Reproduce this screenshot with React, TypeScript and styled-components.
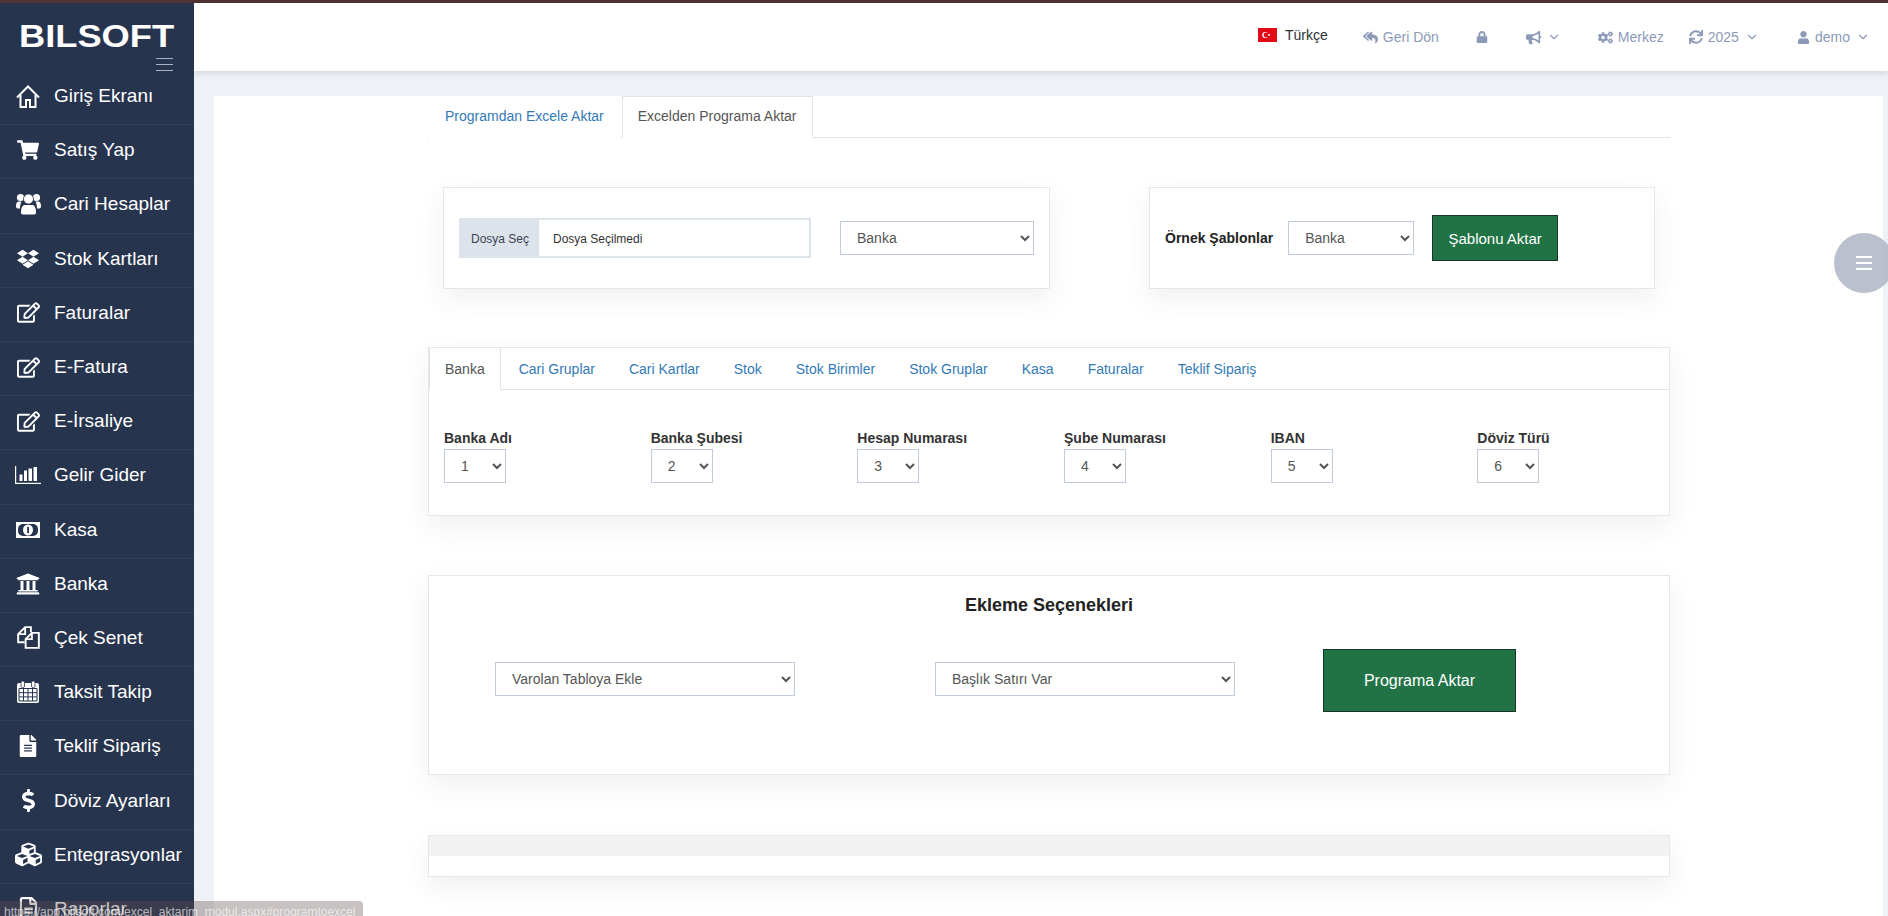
import React from "react";
import styled, { createGlobalStyle } from "styled-components";
import {
  FaShoppingCart,
  FaDropbox,
  FaRegEdit,
  FaUniversity,
  FaFileAlt,
  FaDollarSign,
  FaCubes,
  FaRegFileAlt,
  FaReplyAll,
  FaLock,
  FaBullhorn,
  FaCogs,
  FaSync,
  FaUser,
} from "react-icons/fa";
import { LuChevronDown } from "react-icons/lu";

const GlobalStyle = createGlobalStyle`
  html, body {
    margin: 0;
    padding: 0;
    height: 100%;
    overflow: hidden;
    background: #eef1f5;
    font-family: "Liberation Sans", Arial, sans-serif;
  }
  * { box-sizing: border-box; }
`;

const navy = "#27344e";

const HomeIcon = () => (
  <svg width="24" height="23" viewBox="0 0 24 23" fill="none" stroke="currentColor" strokeWidth="2">
    <path d="M1 12.5 12 1.5l11 11" />
    <path d="M4.5 10v12h5.5v-7h4v7h5.5V10" />
  </svg>
);

const UsersIcon = () => (
  <svg width="25" height="22" viewBox="0 0 25 22" fill="currentColor">
    <circle cx="4.5" cy="4.5" r="3.6" />
    <circle cx="20.5" cy="4.5" r="3.6" />
    <path d="M0 13c0-3 1-4.5 3-4.5h2.5C4.5 10.500 4 12.500 4 15.500H1.500C.5 15.500 0 14.500 0 13z" />
    <path d="M25 13c0-3-1-4.500-3-4.500h-2.500c1 2 1.500 4 1.500 7h2.500c1 0 1.500-1 1.500-2.500z" />
    <circle cx="12.5" cy="6" r="5" stroke={navy} strokeWidth="0.8" />
    <path d="M7 21.500c-1.500 0-2-1-2-2 0-5 1.500-7.500 4-7.500h7c2.500 0 4 2.500 4 7.500 0 1-.5 2-2 2z" />
  </svg>
);

const BarChartIcon = () => (
  <svg width="26" height="18" viewBox="0 0 26 18" fill="currentColor">
    <rect x="0" y="0" width="1.2" height="18" />
    <rect x="0" y="16.800" width="26" height="1.2" />
    <rect x="4.500" y="8.500" width="3" height="6.500" />
    <rect x="9" y="4.500" width="3" height="10.500" />
    <rect x="13.500" y="2.500" width="3.500" height="12.500" />
    <rect x="18.500" y="1" width="3.500" height="14" />
  </svg>
);

const MoneyIcon = () => (
  <svg width="24" height="16" viewBox="0 0 24 16">
    <rect width="24" height="16" fill="currentColor" />
    <rect x="2" y="2" width="20" height="12" rx="5" fill={navy} />
    <ellipse cx="12" cy="8" rx="5" ry="5.500" fill="currentColor" />
    <rect x="11.200" y="4.800" width="1.800" height="6.400" fill={navy} />
  </svg>
);

const FilesIcon = () => (
  <svg width="23" height="23" viewBox="0 0 24 24" fill="none" stroke="currentColor" strokeWidth="2">
    <path d="M14.500 6.500V1.200H8.500L1.200 8.500V17H8" />
    <path d="M8.500 1.500V8.500H1.500" />
    <path d="M15.500 7.200H22.800V22.800H9V13.700Z" />
    <path d="M15.500 7.500V13.700H9" />
  </svg>
);

const CalendarIcon = () => (
  <svg width="22" height="22" viewBox="0 0 22 22">
    <rect x="0" y="2" width="22" height="20" rx="2" fill="currentColor" />
    <rect x="4" y="0" width="3.500" height="6.500" rx="1.500" fill="currentColor" stroke={navy} strokeWidth="0.8" />
    <rect x="14.500" y="0" width="3.500" height="6.500" rx="1.500" fill="currentColor" stroke={navy} strokeWidth="0.8" />
    <path d="M2 7.500H20V20H2ZM2 11.700H20M2 15.900H20M6.500 7.500V20M11 7.500V20M15.500 7.500V20" fill="none" stroke={navy} strokeWidth="1" />
  </svg>
);

const menuItems = [
  { label: "Giriş Ekranı", icon: <HomeIcon /> },
  { label: "Satış Yap", icon: <FaShoppingCart size={22} /> },
  { label: "Cari Hesaplar", icon: <UsersIcon /> },
  { label: "Stok Kartları", icon: <FaDropbox size={22} /> },
  { label: "Faturalar", icon: <FaRegEdit size={23} /> },
  { label: "E-Fatura", icon: <FaRegEdit size={23} /> },
  { label: "E-İrsaliye", icon: <FaRegEdit size={23} /> },
  { label: "Gelir Gider", icon: <BarChartIcon /> },
  { label: "Kasa", icon: <MoneyIcon /> },
  { label: "Banka", icon: <FaUniversity size={24} /> },
  { label: "Çek Senet", icon: <FilesIcon /> },
  { label: "Taksit Takip", icon: <CalendarIcon /> },
  { label: "Teklif Sipariş", icon: <FaFileAlt size={22} /> },
  { label: "Döviz Ayarları", icon: <FaDollarSign size={23} /> },
  { label: "Entegrasyonlar", icon: <FaCubes size={27} /> },
  { label: "Raporlar", icon: <FaRegFileAlt size={23} /> },
];

const innerTabs = [
  "Banka",
  "Cari Gruplar",
  "Cari Kartlar",
  "Stok",
  "Stok Birimler",
  "Stok Gruplar",
  "Kasa",
  "Faturalar",
  "Teklif Sipariş",
];

const columns = ["Banka Adı", "Banka Şubesi", "Hesap Numarası", "Şube Numarası", "IBAN", "Döviz Türü"];

const App = () => {
  return (
    <Page>
      <GlobalStyle />
      <TopStripe />
      <Body>
        <Sidebar>
          <Brand>
            <Logo>BILSOFT</Logo>
            <Burger>
              <span />
              <span />
              <span />
            </Burger>
          </Brand>
          <Menu>
            {menuItems.map((item) => (
              <MenuRow key={item.label}>
                <MenuIcon>{item.icon}</MenuIcon>
                <MenuLabel>{item.label}</MenuLabel>
              </MenuRow>
            ))}
          </Menu>
        </Sidebar>
        <Right>
          <Header>
            <Language>
              <svg width="19" height="14" viewBox="0 0 19 14">
                <rect width="19" height="14" fill="#e30a17" />
                <circle cx="7.2" cy="7" r="3" fill="#fff" />
                <circle cx="8" cy="7" r="2.4" fill="#e30a17" />
                <circle cx="11" cy="7" r="1" fill="#fff" />
              </svg>
              <span>Türkçe</span>
            </Language>
            <HeadItem $left={35}>
              <FaReplyAll size={15} />
              <span>Geri Dön</span>
            </HeadItem>
            <HeadItem $left={37}>
              <FaLock size={12} />
            </HeadItem>
            <HeadItem $left={38}>
              <FaBullhorn size={15} />
              <Chevron size={14} />
            </HeadItem>
            <HeadItem $left={37}>
              <FaCogs size={15} />
              <span>Merkez</span>
            </HeadItem>
            <HeadItem $left={25}>
              <FaSync size={14} />
              <span>2025</span>
              <Chevron size={14} />
            </HeadItem>
            <HeadItem $left={38}>
              <FaUser size={13} />
              <span>demo</span>
              <Chevron size={14} />
            </HeadItem>
          </Header>
          <Content>
            <Sheet>
              <OuterTabs>
                <OuterTab>Programdan Excele Aktar</OuterTab>
                <OuterTab $active>Excelden Programa Aktar</OuterTab>
              </OuterTabs>

              <TopCards>
                <FileCard>
                  <FilePicker>
                    <FileButton>Dosya Seç</FileButton>
                    <FileName>Dosya Seçilmedi</FileName>
                  </FilePicker>
                  <Select $width={194} defaultValue="Banka">
                    <option>Banka</option>
                  </Select>
                </FileCard>
                <TemplateCard>
                  <TemplateLabel>Örnek Şablonlar</TemplateLabel>
                  <Select $width={126} defaultValue="Banka">
                    <option>Banka</option>
                  </Select>
                  <GreenButton>Şablonu Aktar</GreenButton>
                </TemplateCard>
              </TopCards>

              <MappingPanel>
                <InnerTabs>
                  {innerTabs.map((tab, index) => (
                    <InnerTab key={tab} $active={index === 0}>
                      {tab}
                    </InnerTab>
                  ))}
                </InnerTabs>
                <FieldGrid>
                  {columns.map((col, index) => (
                    <Field key={col}>
                      <FieldLabel>{col}</FieldLabel>
                      <Select $width={62} defaultValue={String(index + 1)}>
                        <option>{index + 1}</option>
                      </Select>
                    </Field>
                  ))}
                </FieldGrid>
              </MappingPanel>

              <OptionsPanel>
                <OptionsTitle>Ekleme Seçenekleri</OptionsTitle>
                <OptionsRow>
                  <Select $width={300} defaultValue="Varolan Tabloya Ekle">
                    <option>Varolan Tabloya Ekle</option>
                  </Select>
                  <Select $width={300} defaultValue="Başlık Satırı Var">
                    <option>Başlık Satırı Var</option>
                  </Select>
                  <BigButton>Programa Aktar</BigButton>
                </OptionsRow>
              </OptionsPanel>

              <PreviewPanel>
                <PreviewHead />
              </PreviewPanel>
            </Sheet>
          </Content>
        </Right>
      </Body>
      <FloatingButton>
        <span />
        <span />
        <span />
      </FloatingButton>
      <StatusBubble>https://app.bilsoft.com/excel_aktarim_modul.aspx#programtoexcel</StatusBubble>
    </Page>
  );
};

export default App;

const Page = styled.div`
  width: 1888px;
  height: 916px;
  position: relative;
  overflow: hidden;
  display: flex;
  flex-direction: column;
`;

const TopStripe = styled.div`
  height: 3px;
  flex: none;
  background: #4f3232;
`;

const Body = styled.div`
  flex: 1;
  display: flex;
  min-height: 0;
`;

const Sidebar = styled.aside`
  width: 194px;
  flex: none;
  background: ${navy};
  overflow: hidden;
`;

const Brand = styled.div`
  height: 68px;
  padding: 23px 21px 0 19px;
  display: flex;
  flex-direction: column;
`;

const Logo = styled.div`
  height: 22px;
  font-weight: 700;
  font-size: 31px;
  line-height: 22px;
  color: #fff;
  white-space: nowrap;
  transform: scaleX(1.17);
  transform-origin: left center;
`;

const Burger = styled.div`
  align-self: flex-end;
  width: 17px;
  margin-top: 10px;
  display: flex;
  flex-direction: column;
  gap: 5px;

  span {
    height: 1px;
    background: #a9b2c3;
  }
`;

const Menu = styled.nav`
  display: flex;
  flex-direction: column;
`;

const MenuRow = styled.div`
  flex: none;
  height: 54.2px;
  padding-bottom: 3px;
  border-bottom: 1px solid #2f3e5e;
  display: flex;
  align-items: center;
`;

const MenuIcon = styled.span`
  width: 54px;
  padding-left: 2px;
  flex: none;
  display: flex;
  justify-content: center;
  color: #fff;
`;

const MenuLabel = styled.span`
  font-size: 19px;
  color: #fff;
  white-space: nowrap;
`;

const Right = styled.div`
  flex: 1;
  min-width: 0;
  display: flex;
  flex-direction: column;
`;

const Header = styled.header`
  height: 68px;
  flex: none;
  padding-left: 1064px;
  background: #fff;
  box-shadow: 0 2px 6px rgba(60, 70, 90, 0.16);
  display: flex;
  align-items: center;
  position: relative;
  z-index: 1;
`;

const Language = styled.div`
  display: flex;
  align-items: center;
  gap: 8px;
  margin-top: -4px;
  font-size: 14px;
  color: #2c3136;
  white-space: nowrap;
`;

const HeadItem = styled.div<{ $left: number }>`
  display: flex;
  align-items: center;
  gap: 5px;
  margin-left: ${({ $left }) => $left}px;
  font-size: 14px;
  color: #8c9ab8;
  white-space: nowrap;
`;

const Chevron = styled(LuChevronDown)`
  margin-left: 1px;
`;

const Content = styled.main`
  flex: 1;
  min-height: 0;
  padding: 25px 5px 0 20px;
  background: #eef1f5;
`;

const Sheet = styled.div`
  height: 100%;
  background: #fff;
  padding: 0 213px 0 214px;
`;

const OuterTabs = styled.div`
  height: 42px;
  padding-left: 1px;
  display: flex;
  border-bottom: 1px solid #dfe3e8;
`;

const OuterTab = styled.div<{ $active?: boolean }>`
  height: 42px;
  margin-right: 2px;
  padding: 0 15px 3px;
  display: flex;
  align-items: center;
  font-size: 14px;
  color: ${({ $active }) => ($active ? "#555" : "#337ab7")};
  background: #fff;
  border: 1px solid ${({ $active }) => ($active ? "#dfe3e8" : "transparent")};
  border-bottom-color: ${({ $active }) => ($active ? "#fff" : "transparent")};
`;

const Card = styled.div`
  background: #fff;
  border: 1px solid #e5e7ea;
  box-shadow: 0 10px 25px rgba(60, 70, 90, 0.08);
`;

const TopCards = styled.div`
  margin: 49px 15px 0;
  display: flex;
  justify-content: space-between;
`;

const FileCard = styled(Card)`
  width: 607px;
  height: 102px;
  padding-left: 15px;
  display: flex;
  align-items: center;
  gap: 29px;
`;

const FilePicker = styled.div`
  width: 352px;
  height: 40px;
  border: 2px solid #dde3ea;
  display: flex;
  background: #fff;
`;

const FileButton = styled.div`
  width: 78px;
  padding-top: 2px;
  background: #dde3ea;
  display: flex;
  align-items: center;
  justify-content: center;
  font-size: 12px;
  color: #3b4454;
`;

const FileName = styled.div`
  padding: 2px 0 0 14px;
  display: flex;
  align-items: center;
  font-size: 12px;
  color: #333;
`;

const Select = styled.select<{ $width: number }>`
  width: ${({ $width }) => $width}px;
  height: 34px;
  padding: 0 0 0 12px;
  flex: none;
  font-family: "Liberation Sans", sans-serif;
  font-size: 14px;
  color: #555;
  background: #fff;
  border: 1px solid #c2cbdb;
  border-radius: 0;
  outline: none;
`;

const TemplateCard = styled(Card)`
  width: 506px;
  height: 102px;
  padding-left: 15px;
  display: flex;
  align-items: center;
  gap: 15px;
`;

const TemplateLabel = styled.span`
  font-size: 14px;
  font-weight: 700;
  color: #222;
  white-space: nowrap;
`;

const GreenButton = styled.button`
  width: 126px;
  height: 46px;
  margin-left: 3px;
  padding: 0;
  font-family: "Liberation Sans", sans-serif;
  font-size: 15px;
  color: #fff;
  background: #217346;
  border: 1px solid #17352a;
`;

const MappingPanel = styled(Card)`
  margin-top: 58px;
  height: 169px;
`;

const InnerTabs = styled.div`
  height: 42px;
  display: flex;
  border-bottom: 1px solid #dfe3e8;
`;

const InnerTab = styled.div<{ $active?: boolean }>`
  height: 42px;
  margin-right: 2px;
  padding: 0 15px 1px;
  display: flex;
  align-items: center;
  font-size: 14px;
  color: ${({ $active }) => ($active ? "#555" : "#337ab7")};
  border: 1px solid ${({ $active }) => ($active ? "#dfe3e8" : "transparent")};
  border-top-color: transparent;
  border-bottom-color: ${({ $active }) => ($active ? "#fff" : "transparent")};
`;

const FieldGrid = styled.div`
  margin-top: 40px;
  display: grid;
  grid-template-columns: repeat(6, 1fr);
`;

const Field = styled.div`
  padding-left: 15px;
  display: flex;
  flex-direction: column;
  align-items: flex-start;
`;

const FieldLabel = styled.label`
  margin-bottom: 3px;
  font-size: 14px;
  font-weight: 700;
  line-height: 16px;
  color: #333;
`;

const OptionsPanel = styled(Card)`
  margin-top: 59px;
  height: 200px;
`;

const OptionsTitle = styled.h3`
  margin: 19px 0 0;
  text-align: center;
  font-size: 18px;
  line-height: 20px;
  font-weight: 700;
  color: #222;
`;

const OptionsRow = styled.div`
  margin-top: 34px;
  padding-left: 66px;
  display: flex;
  align-items: flex-start;
  gap: 140px;

  select {
    margin-top: 13px;
  }
`;

const BigButton = styled.button`
  width: 193px;
  height: 63px;
  margin-left: -52px;
  padding: 0;
  font-family: "Liberation Sans", sans-serif;
  font-size: 16px;
  color: #fff;
  background: #217346;
  border: 1px solid #17352a;
`;

const PreviewPanel = styled(Card)`
  margin-top: 60px;
  height: 42px;
`;

const PreviewHead = styled.div`
  height: 20px;
  background: #f2f2f2;
`;

const FloatingButton = styled.div`
  position: absolute;
  left: 1834px;
  top: 233px;
  width: 60px;
  height: 60px;
  border-radius: 50%;
  background: rgba(176, 183, 198, 0.88);
  display: flex;
  flex-direction: column;
  justify-content: center;
  align-items: center;
  gap: 4px;

  span {
    width: 16px;
    height: 2px;
    background: #fff;
  }
`;

const StatusBubble = styled.div`
  position: absolute;
  left: 0;
  bottom: 0;
  width: 363px;
  height: 15px;
  padding: 4px 0 0 4px;
  border-top-right-radius: 4px;
  background: rgba(97, 80, 80, 0.35);
  font-size: 12px;
  line-height: 15px;
  color: rgba(255, 255, 255, 0.65);
  white-space: nowrap;
  overflow: hidden;
`;
